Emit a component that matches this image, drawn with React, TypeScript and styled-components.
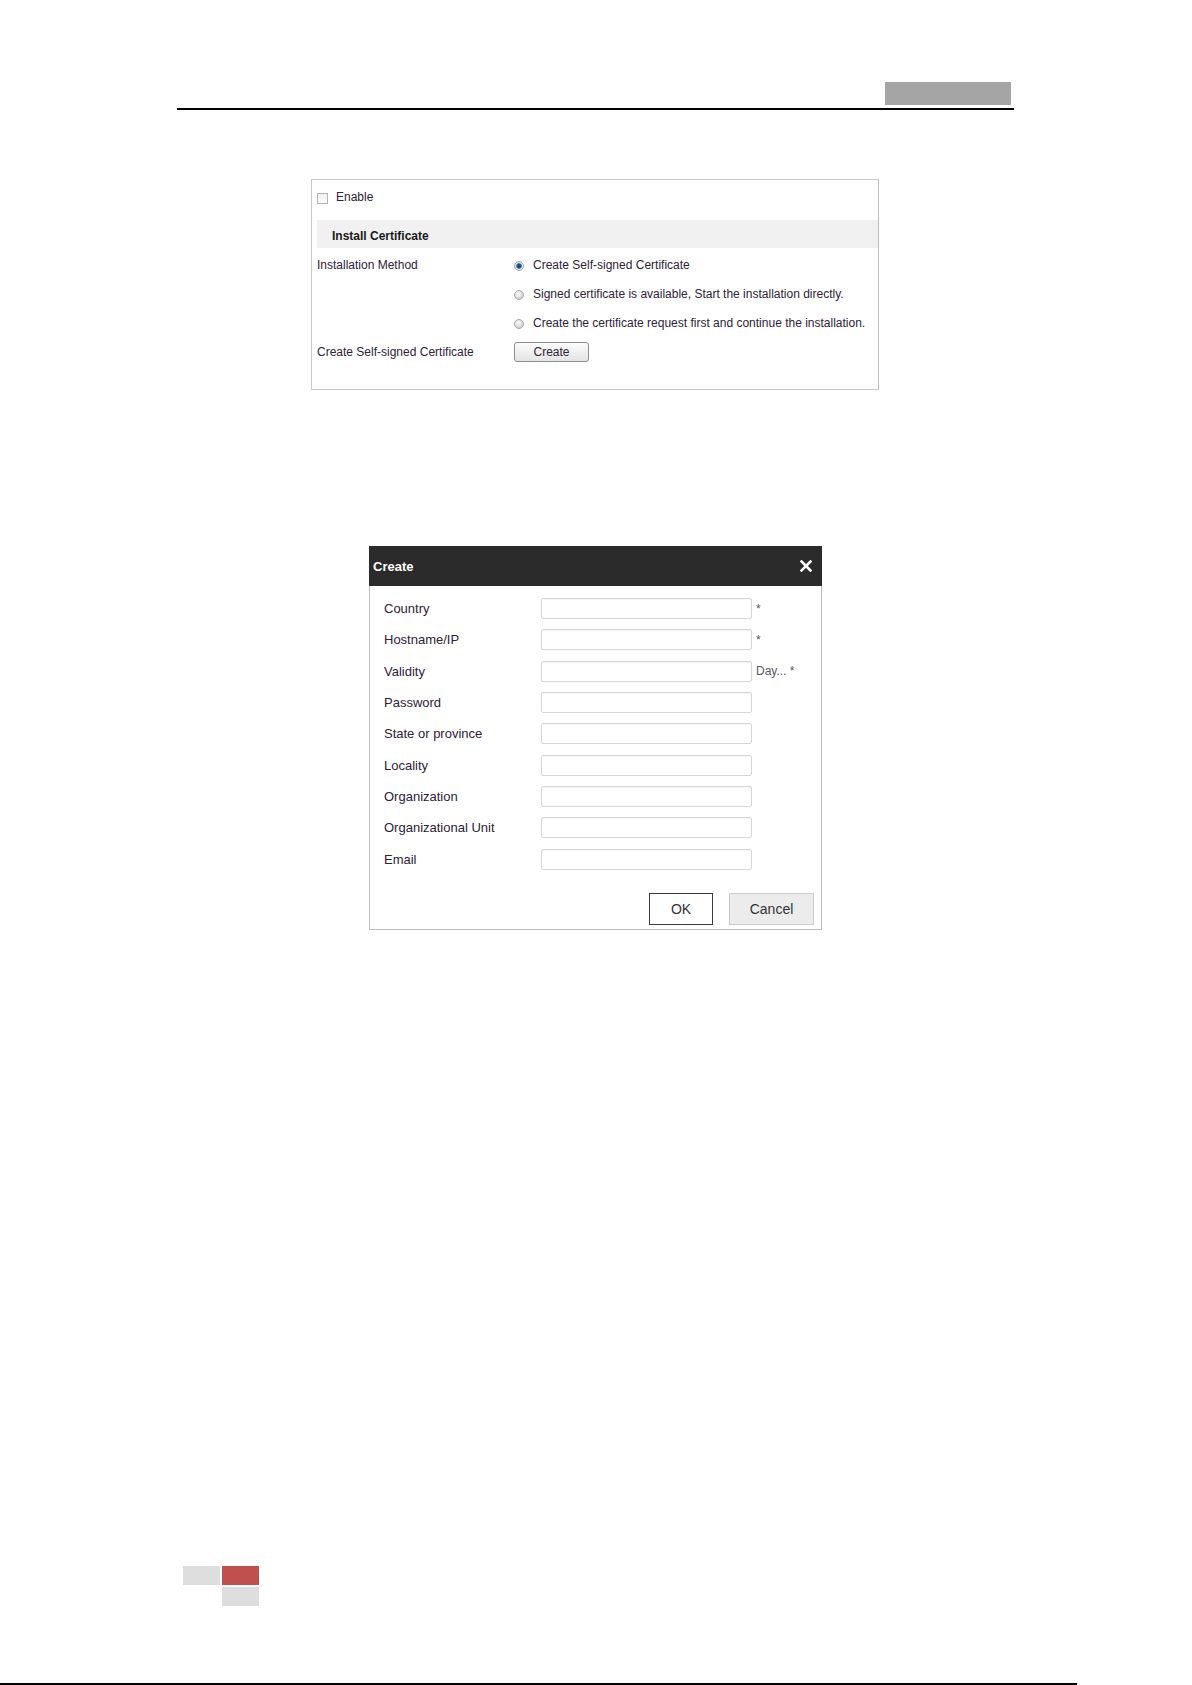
import styled, { createGlobalStyle } from "styled-components";

const GlobalStyle = createGlobalStyle`
    html, body {
        margin:0;
        padding:0;
        background:#ffffff;
    }
    body {
        font-family: "Liberation Sans", Arial, sans-serif;
        color:#2e2138;
    }
    * {
        box-sizing: border-box;
    }
`

const Page = styled.div`
    width:1192px;
    height:1685px;
    display:flex;
    flex-direction: column;
    padding-top:82px;
`

const HeaderBar = styled.div`
    margin:0 178px 0 177px;
    display:flex;
    flex-direction: column;
    align-items: flex-end;
`

const HeaderTab = styled.div`
    width:126px;
    height:23px;
    margin-right:3px;
    background-color:#a5a5a5;
`

const HeaderRule = styled.div`
    align-self: stretch;
    height:2px;
    margin-top:3px;
    background-color:#000000;
`

const SettingsPanel = styled.div`
    margin:69px 0 0 311px;
    width:568px;
    border:1px solid #c9c9c9;
    border-right-color:#bdbdbd;
    padding:10px 0 23px 5px;
    font-size:12px;
`

const EnableRow = styled.label`
    display:flex;
    align-items: center;
    height:14px;
    gap:8px;
    margin-bottom:1px;
`

const CheckBox = styled.span`
    width:11px;
    height:11px;
    margin-top:2px;
    border:1px solid #b5b5b5;
    background:linear-gradient(#f1f1f1, #fcfcfc);
`

const SectionBand = styled.div`
    margin-top:16px;
    height:28px;
    display:flex;
    align-items: center;
    padding:3px 0 0 15px;
    background-color:#f1f1f1;
    font-weight:bold;
    color:#1a1a1a;
`

const FormRows = styled.div`
    margin-top:2px;
    display:flex;
    flex-direction: column;
`

const SettingRow = styled.div`
    display:grid;
    grid-template-columns: 197px 1fr;
    align-items: center;
    height:29px;
`

const RadioOption = styled.label`
    display:flex;
    align-items: center;
    gap:9px;
`

const RadioDot = styled.span<{ $checked?: boolean }>`
    width:10px;
    height:10px;
    margin-top:3px;
    border-radius:50%;
    border:1px solid ${(p) => (p.$checked ? "#9aa6b0" : "#a8a8a8")};
    background:${(p) => p.$checked
        ? "radial-gradient(circle, #1d4f7a 0 2px, #5d8fb7 2.6px, #e7ecf0 3.2px)"
        : "radial-gradient(circle at 40% 35%, #f6f6f6 0 1px, #d4d4d4 4.5px)"};
`

const SmallButton = styled.button`
    width:75px;
    height:20px;
    padding:0;
    border:1px solid #8c8c8c;
    border-radius:3px;
    background:linear-gradient(#fbfbfb, #e4e4e4);
    font-family: inherit;
    font-size:12px;
    color:#2e2138;
`

const Dialog = styled.div`
    margin:156px 0 0 369px;
    width:453px;
    border:1px solid #bdbdbd;
    display:flex;
    flex-direction: column;
    font-size:13px;
`

const DialogHeader = styled.div`
    height:40px;
    margin:-1px -1px 0 -1px;
    padding:0 10px 0 4px;
    display:flex;
    align-items: center;
    justify-content: space-between;
    background-color:#2b2b2b;
    color:#ffffff;
    font-weight:bold;
`

const CloseIcon = styled.svg`
    width:12px;
    height:12px;
`

const DialogBody = styled.div`
    padding:12px 7px 4px 14px;
    display:flex;
    flex-direction: column;
    gap:10.35px;
`

const FieldRow = styled.div`
    display:grid;
    grid-template-columns: 157px 211px auto;
    align-items: center;
    height:21px;
`

const TextInput = styled.input`
    width:211px;
    height:21px;
    border:1px solid #d6d6d6;
    border-radius:2px;
    box-shadow: inset 0 1px 1px rgba(0,0,0,0.04);
    background:#ffffff;
`

const FieldNote = styled.span`
    margin-left:4px;
    font-size:12px;
    color:#555566;
`

const ButtonRow = styled.div`
    margin-top:12.9px;
    display:flex;
    justify-content: flex-end;
    gap:16px;
`

const DialogButton = styled.button<{ $primary?: boolean }>`
    height:32px;
    width:${(p) => (p.$primary ? "64px" : "85px")};
    padding:0;
    border:1px solid ${(p) => (p.$primary ? "#3a3a3a" : "#cccccc")};
    background-color:${(p) => (p.$primary ? "#ffffff" : "#ececec")};
    font-family: inherit;
    font-size:14px;
    color:#333333;
`

const FooterMarks = styled.div`
    margin:636px 0 0 183px;
    display:grid;
    grid-template-columns: 37px 37px;
    grid-auto-rows: 19px;
    gap:2px;
`

const Mark = styled.div<{ $tone: "gray" | "red" | "none" }>`
    background-color:${(p) => (p.$tone === "red" ? "#c0504d" : p.$tone === "gray" ? "#dedede" : "transparent")};
`

const BottomRule = styled.div`
    margin-top:auto;
    width:1077px;
    height:2px;
    background-color:#000000;
`

const fields: { label: string; note?: string }[] = [
    { label: "Country", note: "*" },
    { label: "Hostname/IP", note: "*" },
    { label: "Validity", note: "Day... *" },
    { label: "Password" },
    { label: "State or province" },
    { label: "Locality" },
    { label: "Organization" },
    { label: "Organizational Unit" },
    { label: "Email" },
]

const methods = [
    "Create Self-signed Certificate",
    "Signed certificate is available, Start the installation directly.",
    "Create the certificate request first and continue the installation.",
]

export default function App() {
    return (
        <>
            <GlobalStyle />
            <Page>
                <HeaderBar>
                    <HeaderTab />
                    <HeaderRule />
                </HeaderBar>

                <SettingsPanel>
                    <EnableRow>
                        <CheckBox />
                        Enable
                    </EnableRow>
                    <SectionBand>Install Certificate</SectionBand>
                    <FormRows>
                        {methods.map((m, i) => (
                            <SettingRow key={m}>
                                <span>{i === 0 ? "Installation Method" : ""}</span>
                                <RadioOption>
                                    <RadioDot $checked={i === 0} />
                                    {m}
                                </RadioOption>
                            </SettingRow>
                        ))}
                        <SettingRow>
                            <span>Create Self-signed Certificate</span>
                            <div>
                                <SmallButton>Create</SmallButton>
                            </div>
                        </SettingRow>
                    </FormRows>
                </SettingsPanel>

                <Dialog>
                    <DialogHeader>
                        Create
                        <CloseIcon viewBox="0 0 12 12">
                            <path d="M1.5 1.5 L10.5 10.5 M10.5 1.5 L1.5 10.5" stroke="#ffffff" strokeWidth="2.6" strokeLinecap="square" />
                        </CloseIcon>
                    </DialogHeader>
                    <DialogBody>
                        {fields.map((f) => (
                            <FieldRow key={f.label}>
                                <span>{f.label}</span>
                                <TextInput type="text" />
                                {f.note ? <FieldNote>{f.note}</FieldNote> : <span />}
                            </FieldRow>
                        ))}
                        <ButtonRow>
                            <DialogButton $primary>OK</DialogButton>
                            <DialogButton>Cancel</DialogButton>
                        </ButtonRow>
                    </DialogBody>
                </Dialog>

                <FooterMarks>
                    <Mark $tone="gray" />
                    <Mark $tone="red" />
                    <Mark $tone="none" />
                    <Mark $tone="gray" />
                </FooterMarks>

                <BottomRule />
            </Page>
        </>
    )
}
